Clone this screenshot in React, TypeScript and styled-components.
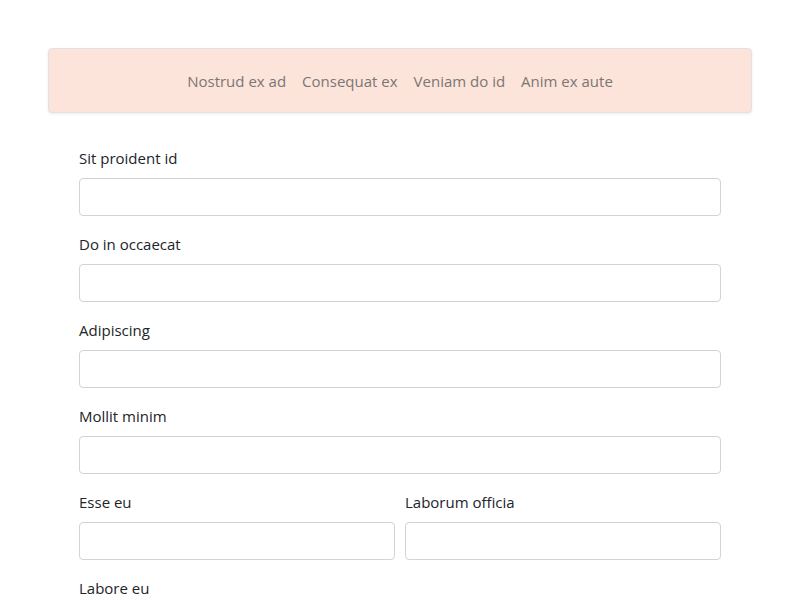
import React from "react";
import styled, { createGlobalStyle } from "styled-components";

const Global = createGlobalStyle`
  html, body { margin: 0; padding: 0; background: #fff; }
  body { font-family: "Open Sans", "Noto Sans", sans-serif; color: #212529; }
  * { box-sizing: border-box; }
`;

const Page = styled.div`
  padding: 48px 48px 0;
`;

const NavCard = styled.nav`
  height: 65px;
  background: #fde4da;
  border: 1px solid #dfe3e8;
  border-radius: 4px;
  box-shadow: 0 1px 3px rgba(0, 0, 0, 0.08);
  display: flex;
  align-items: center;
  justify-content: center;
  gap: 16px;
`;

const NavLink = styled.a`
  font-size: 15px;
  color: #7a7674;
  text-decoration: none;
  line-height: 22px;
`;

const Form = styled.form`
  margin-top: 33px;
  padding: 0 31px;
  display: flex;
  flex-direction: column;
  gap: 16px;
`;

const Row = styled.div`
  display: grid;
  grid-template-columns: 1fr 1fr;
  gap: 10px;
`;

const Group = styled.div`
  display: flex;
  flex-direction: column;
`;

const Label = styled.label`
  font-size: 15px;
  line-height: 24px;
  margin-bottom: 8px;
  color: #212529;
`;

const Input = styled.input`
  height: 38px;
  width: 100%;
  border: 1px solid #ced4da;
  border-radius: 4px;
  background: #fff;
  padding: 6px 12px;
  font: inherit;
`;

const Field = ({ label }: { label: string }) => (
  <Group>
    <Label>{label}</Label>
    <Input type="text" />
  </Group>
);

export default function App() {
  return (
    <Page>
      <Global />
      <NavCard>
        {["Nostrud ex ad", "Consequat ex", "Veniam do id", "Anim ex aute"].map((t) => (
          <NavLink key={t} href="#">{t}</NavLink>
        ))}
      </NavCard>
      <Form>
        <Field label="Sit proident id" />
        <Field label="Do in occaecat" />
        <Field label="Adipiscing" />
        <Field label="Mollit minim" />
        <Row>
          <Field label="Esse eu" />
          <Field label="Laborum officia" />
        </Row>
        <Field label="Labore eu" />
      </Form>
    </Page>
  );
}
